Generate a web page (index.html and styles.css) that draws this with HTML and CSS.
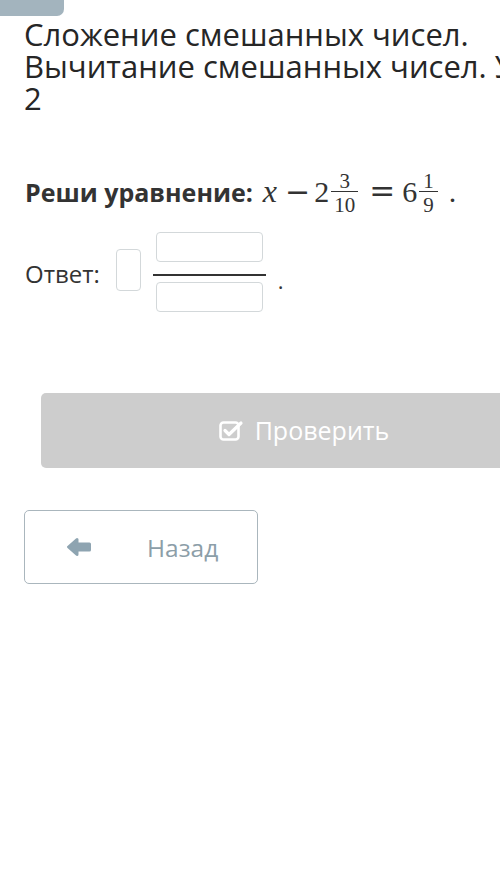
FILE: index.html
```html
<!DOCTYPE html>
<html lang="ru">
<head>
<meta charset="utf-8">
<link rel="stylesheet" href="styles.css">
</head>
<body>
<div class="page">
<div class="tab"></div>
<h1 class="title">Сложение смешанных чисел. Вычитание смешанных чисел. Урок 2</h1>
<div class="task"><span class="label">Реши уравнение:</span><span class="mi">x</span><span class="op minus">−</span><span class="mn n2">2</span><span class="frac f1"><span class="num">3</span><span class="den">10</span></span><span class="op eq">=</span><span class="mn n6">6</span><span class="frac f2"><span class="num">1</span><span class="den">9</span></span><span class="dot">.</span></div>
<div class="answer">
  <span class="alabel">Ответ:</span>
  <span class="box whole"></span>
  <span class="afrac">
    <span class="box part"></span>
    <span class="bar"></span>
    <span class="box part"></span>
  </span>
  <span class="adot">.</span>
</div>
<div class="check">
  <svg class="chk" width="26" height="22" viewBox="0 0 26 22"><rect x="1.5" y="2.5" width="18" height="17" rx="3" fill="none" stroke="#fff" stroke-width="2.6"/><path d="M6 10.5 L10 14.5 L22 3" fill="none" stroke="#fff" stroke-width="3.2" stroke-linecap="round" stroke-linejoin="round"/></svg>
  <span>Проверить</span>
</div>
<div class="back">
  <svg class="arrow" width="26" height="22" viewBox="0 0 26 22"><path d="M2.5 11 L11 3.5 L11 8 L23.5 8 L23.5 14 L11 14 L11 18.5 Z" fill="#8ea4b1" stroke="#8ea4b1" stroke-width="3" stroke-linejoin="round"/></svg>
  <span>Назад</span>
</div>
</div>
</body>
</html>
```
FILE: styles.css
```css
html, body { margin: 0; padding: 0; overflow: hidden; }
body {
  background: #fff;
  font-family: "Open Sans", "Liberation Sans", sans-serif;
  color: #333;
}
.page {
  width: 500px;
  height: 873px;
  overflow: hidden;
}
.tab {
  width: 64px;
  height: 16px;
  background: #a3b4be;
  border-bottom-right-radius: 7px;
}
.title {
  margin: 2px 0 0 24px;
  width: 555px;
  font-weight: 400;
  font-size: 31px;
  line-height: 32px;
  color: #262626;
}
.task {
  margin: 57px 0 0 25px;
  white-space: nowrap;
  font-size: 30px;
  line-height: 30px;
  font-family: "Liberation Serif", serif;
  color: #333;
}
.label {
  font-family: "Open Sans", "Liberation Sans", sans-serif;
  font-weight: 700;
  font-size: 25px;
  color: #333;
}
.mi { font-style: italic; margin-left: 10px; font-size: 32px; }
.op { font-family: "DejaVu Serif", serif; font-size: 30px; }
.minus { margin-left: 8px; }
.n2 { margin-left: 4px; }
.eq { margin-left: 11px; font-size: 31px; }
.n6 { margin-left: 7px; }
.frac {
  display: inline-block;
  vertical-align: -10px;
  font-size: 21px;
  text-align: center;
  margin-left: 2px;
}
.frac .num {
  display: block;
  height: 20px;
  line-height: 20px;
  border-bottom: 1.5px solid #333;
}
.frac .den {
  display: block;
  line-height: 20px;
  padding-top: 3px;
}
.f1 .num, .f1 .den { padding-left: 3px; padding-right: 3px; }
.f2 .num, .f2 .den { padding-left: 4px; padding-right: 4px; }
.dot { margin-left: 11px; }
.answer {
  margin: 17px 0 0 25px;
  display: flex;
  align-items: center;
}
.alabel {
  font-size: 24px;
  line-height: 32px;
  color: #333;
  margin-top: 4px;
}
.box {
  display: block;
  border: 1.5px solid #d3d8da;
  border-radius: 4px;
  background: #fff;
  box-sizing: border-box;
}
.whole { width: 25px; height: 42px; margin-left: 16px; margin-top: -4px; }
.afrac {
  display: flex;
  flex-direction: column;
  margin-left: 12px;
  align-items: center;
}
.part { width: 107px; height: 30px; }
.bar { width: 113px; height: 2px; background: #333; margin: 12px 0 6px; }
.adot { font-size: 22px; margin-left: 12px; margin-top: 16px; }
.check {
  margin: 81px 0 0 41px;
  width: 526px;
  height: 75px;
  border-radius: 5px;
  background: #cdcdcd;
  color: #fff;
  display: flex;
  align-items: center;
  justify-content: center;
  gap: 10px;
  font-size: 25px;
}
.check span { margin-top: -2px; }
.back {
  margin: 42px 0 0 24px;
  width: 232px;
  height: 72px;
  border: 1.5px solid #aab6bd;
  border-radius: 5px;
  display: flex;
  align-items: center;
  color: #8c9ea8;
  font-size: 24.5px;
}
.arrow { margin-left: 41px; }
.back span { margin-left: 55px; }
```
